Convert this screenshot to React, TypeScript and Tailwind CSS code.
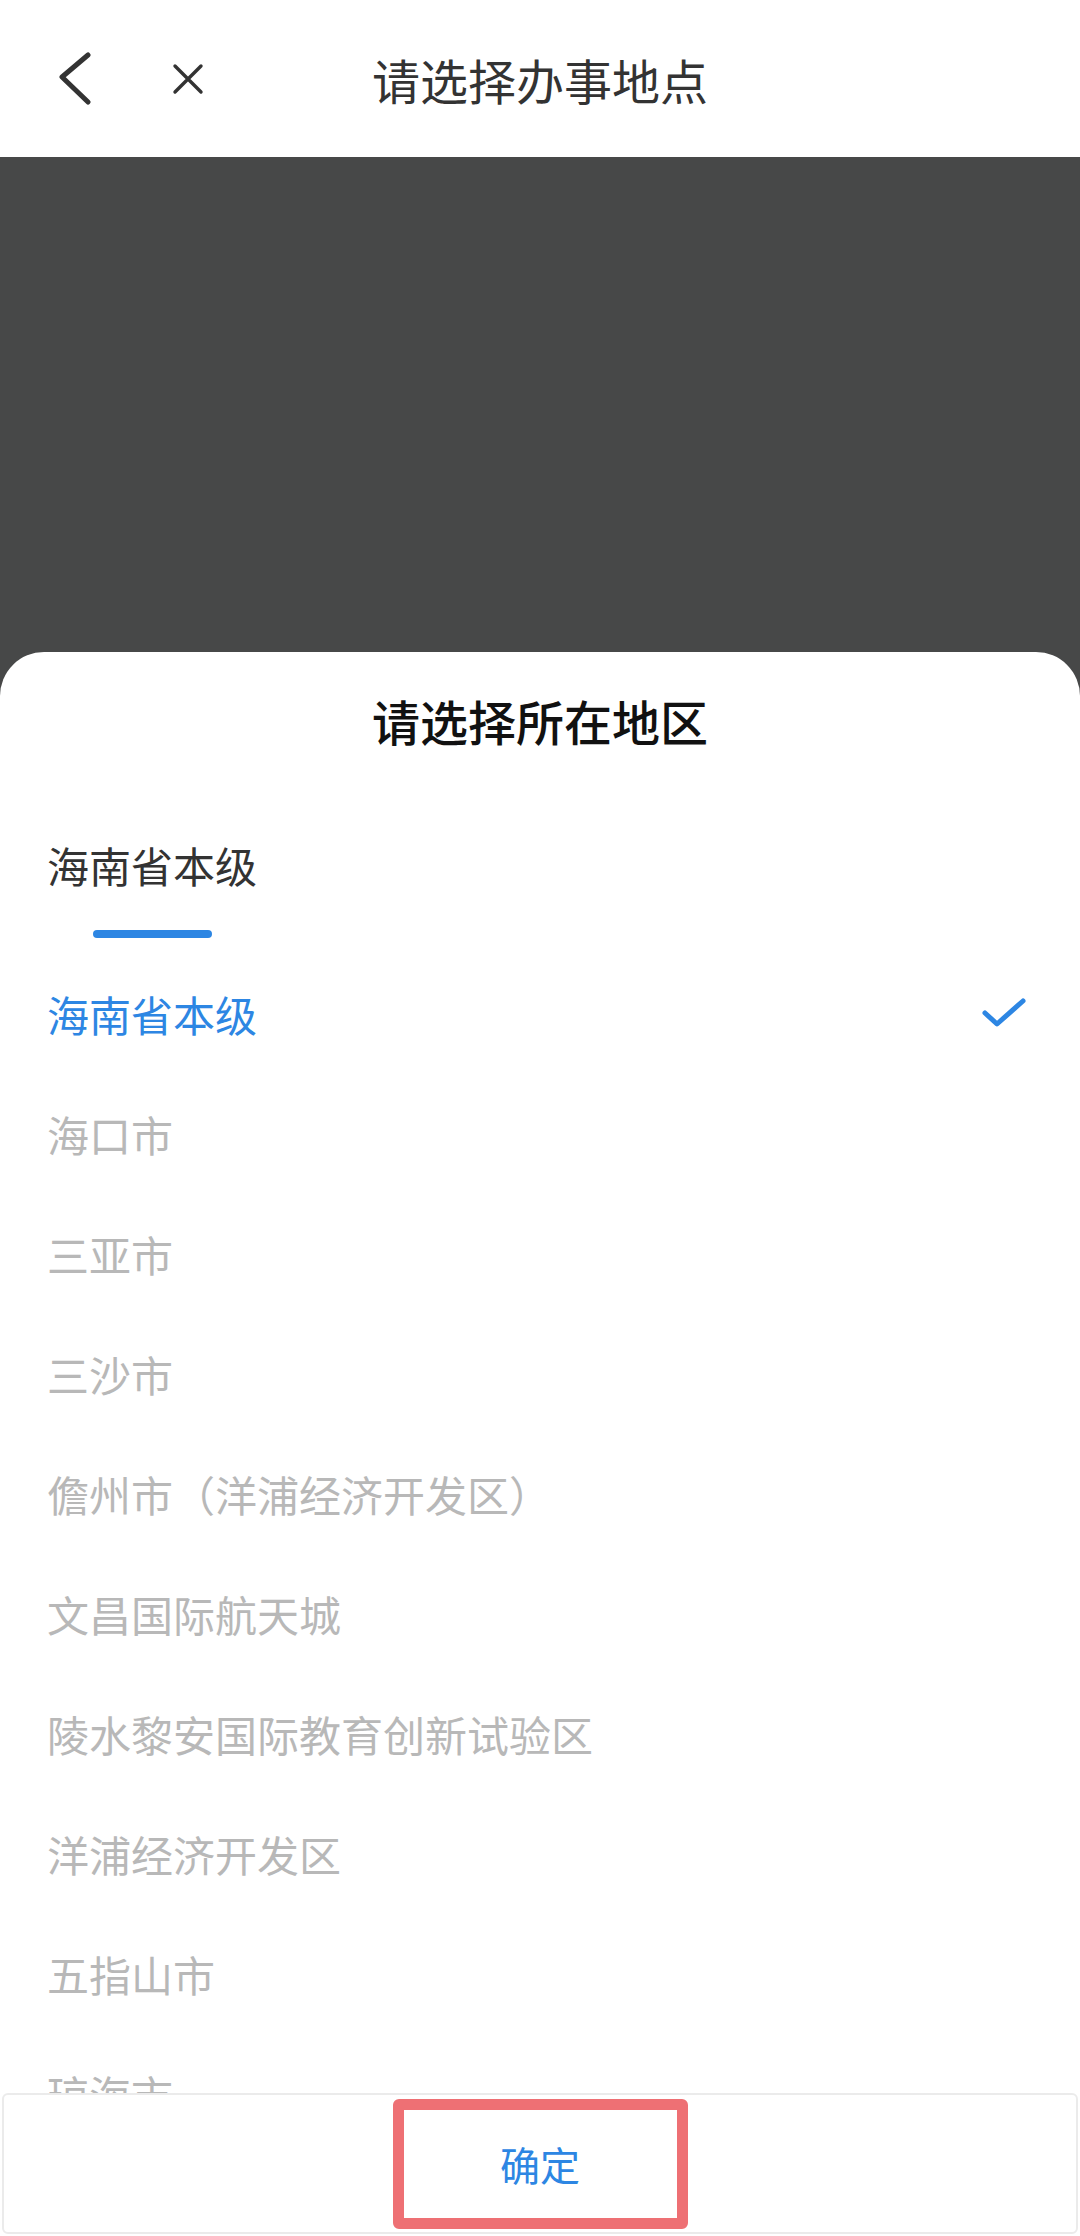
const regions = [
    '海南省本级',
    '海口市',
    '三亚市',
    '三沙市',
    '儋州市（洋浦经济开发区）',
    '文昌国际航天城',
    '陵水黎安国际教育创新试验区',
    '洋浦经济开发区',
    '五指山市',
    '琼海市',
    '万宁市',
];

const font = { fontFamily: '"Noto Sans CJK SC", "Noto Sans", sans-serif' };

const App = () => {
    const selected = 0;

    return (
        <div className="flex h-[2236px] w-[1080px] flex-col overflow-hidden bg-[#474848]" style={font}>
            {/* top bar */}
            <div className="relative flex h-[157px] shrink-0 items-center bg-white">
                <svg className="ml-[57px]" width="36" height="54" viewBox="0 0 36 54" fill="none">
                    <path d="M31 3 L5 25 L31 50" stroke="#333" strokeWidth="5" strokeLinecap="round" strokeLinejoin="round" />
                </svg>
                <svg className="ml-[78px]" width="34" height="34" viewBox="0 0 34 34" fill="none">
                    <path d="M4 4 L30 30 M30 4 L4 30" stroke="#333" strokeWidth="3.4" strokeLinecap="round" />
                </svg>
                <div className="pointer-events-none absolute inset-0 flex items-center justify-center text-[48px] text-[#333]">
                    请选择办事地点
                </div>
            </div>

            <div className="h-[495px] shrink-0" />

            {/* bottom sheet */}
            <div className="flex min-h-0 flex-1 flex-col overflow-hidden rounded-t-[44px] bg-white">
                <div className="flex h-[136px] shrink-0 items-center justify-center text-[48px] font-medium text-[#111]">
                    请选择所在地区
                </div>

                <div className="shrink-0 px-[47px] pt-[49px]">
                    <div className="text-[42px] leading-[56px] text-[#333]">海南省本级</div>
                    <div className="ml-[46px] mt-[37px] h-[8px] w-[119px] rounded-full bg-[#2d86e3]" />
                </div>

                <div className="mt-[15px] min-h-0 flex-1 overflow-hidden">
                    {regions.map((name, i) => (
                        <div key={name} className="flex h-[120px] items-center justify-between pl-[47px] pr-[54px]">
                            <span
                                className={
                                    i === selected
                                        ? 'text-[42px] text-[#2d86e3]'
                                        : 'text-[42px] text-[#b8b8b8]'
                                }
                            >
                                {name}
                            </span>
                            {i === selected && (
                                <svg width="44" height="30" viewBox="0 0 44 30" fill="none">
                                    <path
                                        d="M3 15 L15 26 L41 3"
                                        stroke="#2d86e3"
                                        strokeWidth="5"
                                        strokeLinecap="round"
                                        strokeLinejoin="round"
                                    />
                                </svg>
                            )}
                        </div>
                    ))}
                </div>

                <div className="mx-[2px] mb-[2px] flex h-[141px] shrink-0 items-center justify-center rounded-[6px] border-2 border-[#ebebeb] bg-white">
                    <div className="flex h-[130px] w-[295px] items-center justify-center rounded-[6px] border-[11px] border-[#ee7074] text-[40px] text-[#2d86e3]">
                        确定
                    </div>
                </div>
            </div>
        </div>
    );
};

export default App;
